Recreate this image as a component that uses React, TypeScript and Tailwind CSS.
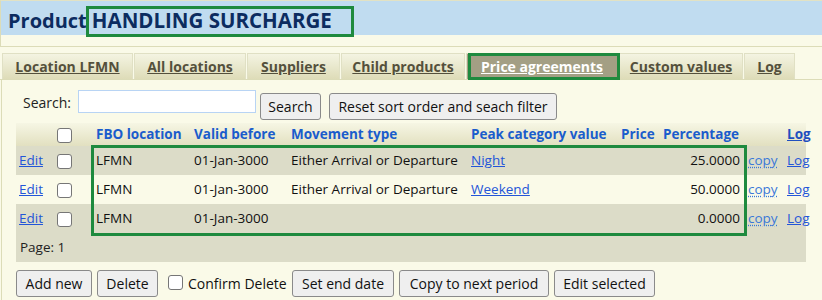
import React from "react";

const font = { fontFamily: '"Open Sans", "Noto Sans", sans-serif' };

const tabs = [
  { name: "Location LFMN", w: "w-[131px]" },
  { name: "All locations", w: "w-[112px]" },
  { name: "Suppliers", w: "w-[93px]" },
  { name: "Child products", w: "w-[124px]" },
  { name: "Price agreements", w: "w-[152px]", active: true },
  { name: "Custom values", w: "w-[124px]" },
  { name: "Log", w: "w-[51px]" },
];

const rows = [
  { loc: "LFMN", valid: "01-Jan-3000", move: "Either Arrival or Departure", peak: "Night", pct: "25.0000" },
  { loc: "LFMN", valid: "01-Jan-3000", move: "Either Arrival or Departure", peak: "Weekend", pct: "50.0000" },
  { loc: "LFMN", valid: "01-Jan-3000", move: "", peak: "", pct: "0.0000" },
];

const Btn: React.FC<{ children: React.ReactNode; className?: string }> = ({ children, className }) => (
  <button
    className={`h-[27px] rounded-[3px] border border-[#8a8a8a] bg-[#efefef] text-[14px] text-[#111] whitespace-nowrap ${className ?? ""}`}
  >
    {children}
  </button>
);

const Box = () => (
  <span className="inline-block w-[15px] h-[15px] rounded-[3px] border border-[#767676] bg-white align-middle" />
);

export default function App() {
  return (
    <div className="relative w-[822px] h-[300px] overflow-hidden bg-[#fafae8]" style={font}>
      {/* header */}
      <div className="h-[47px] border-t border-[#e2e2c4] border-b border-b-[#dcdcb8] border-l border-l-[#dcdcb8]">
        <div className="h-[34px] bg-[#c0dcf0] flex items-center pt-[5px] pl-[7px] font-bold text-[#0c2c60] leading-none">
          <span className="text-[20px]">Product</span>
          <span className="ml-[5px] text-[20.5px]">HANDLING SURCHARGE</span>
        </div>
      </div>

      {/* tabs */}
      <div className="mt-[6px] flex items-end gap-[1px] pl-[2px] border-b border-[#dcdcb8] h-[27px]">
        {tabs.map((t) => (
          <div
            key={t.name}
            className={`${t.w} h-[26px] flex items-center justify-center border border-b-0 border-[#e0e0c4] text-[14px] font-bold underline ${
              t.active
                ? "bg-[#a39f84] text-white"
                : "bg-gradient-to-b from-[#f4f4e2] to-[#dedcb8] text-[#54503c]"
            }`}
          >
            {t.name}
          </div>
        ))}
      </div>

      {/* content */}
      <div className="border-l border-[#dcdcb8] ml-[1px] pl-[14px] pt-[10px] h-[230px]">
        <div className="flex items-start text-[14px] text-[#222] h-[27px]">
          <span className="pl-[7px] pt-[2px] w-[62px]">Search:</span>
          <span className="w-[178px] h-[23px] border border-[#b8d4f4] bg-white" />
          <Btn className="mt-[3px] ml-[4px] w-[61px]">Search</Btn>
          <Btn className="mt-[3px] ml-[8px] w-[228px]">Reset sort order and seach filter</Btn>
        </div>

        <table className="mt-[6px] w-[790px] border-collapse text-[13.5px] text-[#111] table-fixed">
          <colgroup>
            <col className="w-[36px]" />
            <col className="w-[40px]" />
            <col className="w-[99px]" />
            <col className="w-[96px]" />
            <col className="w-[180px]" />
            <col className="w-[151px]" />
            <col className="w-[41px]" />
            <col className="w-[86px]" />
            <col className="w-[40px]" />
            <col className="w-[21px]" />
          </colgroup>
          <thead>
            <tr className="h-[23px] bg-gradient-to-b from-[#f6f6e4] to-[#e2e0c0] font-bold text-[#1a5ccc] text-left">
              <th />
              <th className="text-left pl-[5px]"><Box /></th>
              <th className="pl-[4px]">FBO location</th>
              <th className="pl-[3px]">Valid before</th>
              <th className="pl-[4px]">Movement type</th>
              <th className="pl-[4px]">Peak category value</th>
              <th className="pl-[3px]">Price</th>
              <th className="pl-[4px]">Percentage</th>
              <th />
              <th className="text-[#1f4fbf] underline text-left pl-[2px]">Log</th>
            </tr>
          </thead>
          <tbody>
            {rows.map((r, i) => (
              <tr key={i} className={`h-[29px] ${i % 2 === 1 ? "bg-[#fafae8]" : "bg-[#dcdcc8]"}`}>
                <td className="pl-[3px] text-[#2355d8] underline">Edit</td>
                <td className="pl-[5px]"><Box /></td>
                <td className="pl-[4px]">{r.loc}</td>
                <td className="pl-[3px]">{r.valid}</td>
                <td className="pl-[4px] whitespace-nowrap">{r.move}</td>
                <td className="pl-[4px] text-[#2355d8] underline">{r.peak}</td>
                <td />
                <td className="text-right pr-[5px]">{r.pct}</td>
                <td className="pl-[3px] text-[#3a78d8] underline decoration-dotted">copy</td>
                <td className="pl-[2px] text-[#2355d8] underline">Log</td>
              </tr>
            ))}
            <tr className="h-[29px] bg-[#dcdcc8]">
              <td colSpan={10} className="pl-[4px] text-[#222]">Page: 1</td>
            </tr>
          </tbody>
        </table>

        <div className="mt-[8px] flex items-center gap-[5px] text-[14px] text-[#111]">
          <Btn className="w-[76px]">Add new</Btn>
          <Btn className="w-[61px]">Delete</Btn>
          <label className="flex items-center gap-[5px] ml-[5px] w-[119px] whitespace-nowrap">
            <span className="-mt-[6px]"><Box /></span>
            Confirm Delete
          </label>
          <Btn className="w-[102px]">Set end date</Btn>
          <Btn className="w-[150px]">Copy to next period</Btn>
          <Btn className="w-[101px]">Edit selected</Btn>
        </div>
      </div>

      {/* annotation boxes */}
      <div className="absolute left-[86px] top-[6px] w-[268px] h-[31px] border-[3px] border-[#1e8a3e]" />
      <div className="absolute left-[468px] top-[53px] w-[152px] h-[27px] border-[3px] border-[#1e8a3e]" />
      <div className="absolute left-[91px] top-[145px] w-[656px] h-[91px] border-[3px] border-[#1e8a3e]" />
    </div>
  );
}
